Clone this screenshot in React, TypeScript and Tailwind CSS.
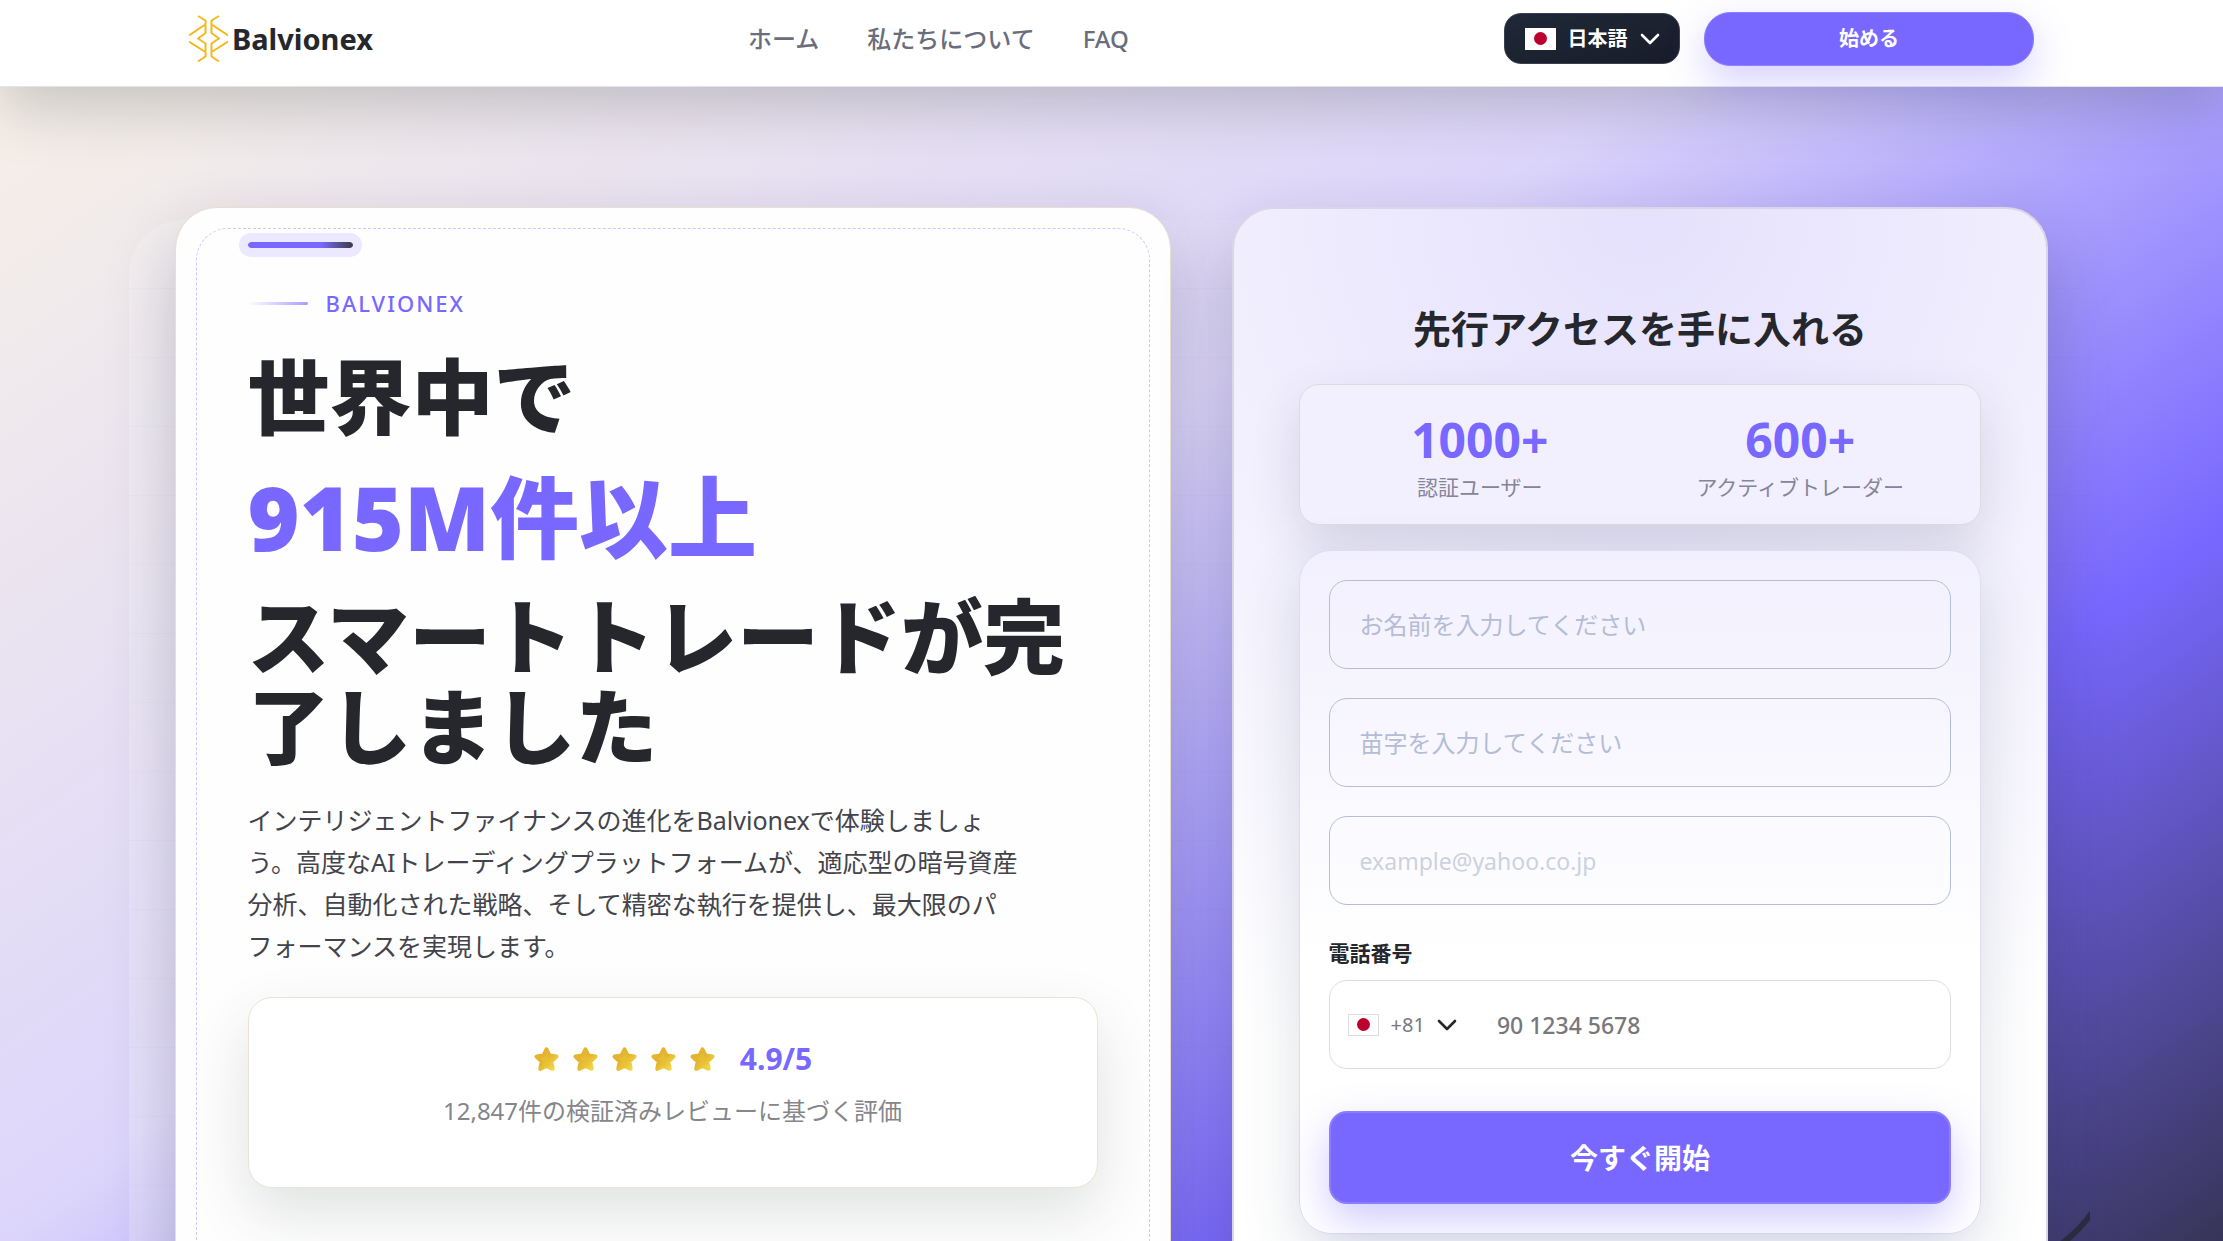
import React from "react";

function Logo() {
  return (
    <svg width="39" height="48" viewBox="0 0 39 48" fill="none" stroke="#f3b91c" strokeWidth="2" strokeLinejoin="round" aria-hidden="true">
      <path d="M9 1l7.500 4.500V18L9 23.500l7.500 5V41.500L9 46.500M15.500 10 0 20.500M0 26.500l15.500 10" />
      <path d="M30 1l-7.500 4.500V18l7.500 5.500-7.500 5V41.500l7.500 5M23.500 10 39 20.500M39 26.500l-15.500 10" />
    </svg>
  );
}

function Flag({ className = "" }: { className?: string }) {
  return (
    <span className={"inline-flex h-[22px] w-[31px] shrink-0 items-center justify-center bg-white " + className}>
      <span className="size-[13px] rounded-full bg-[#bc002d]" />
    </span>
  );
}

function Chevron() {
  return (
    <svg width="20" height="12" viewBox="0 0 20 12" fill="none" stroke="currentColor" strokeWidth="2.6" strokeLinecap="round" strokeLinejoin="round" aria-hidden="true">
      <path d="M2 2l8 8 8-8" />
    </svg>
  );
}

function Star() {
  return (
    <svg width="27" height="27" viewBox="0 0 24 24" aria-hidden="true">
      <defs>
        <linearGradient id="starFill" x1="0" y1="0" x2="1" y2="1">
          <stop offset="0" stopColor="#f3c53c" />
          <stop offset="0.5" stopColor="#e6bc35" />
          <stop offset="1" stopColor="#f1d23a" />
        </linearGradient>
        <linearGradient id="starEdge" x1="0" y1="0" x2="1" y2="1">
          <stop offset="0" stopColor="#e6b12f" />
          <stop offset="0.5" stopColor="#e3b630" />
          <stop offset="1" stopColor="#f6de4a" />
        </linearGradient>
      </defs>
      <path d="M12 3l2.700 5.500 6.200.9-4.600 4.400 1.200 6.500L12 17.800l-5.500 2.500 1.200-6.500L3.100 9.400l6.200-.9z" fill="url(#starFill)" stroke="url(#starEdge)" strokeWidth="3.600" strokeLinejoin="round" />
    </svg>
  );
}

const fieldClass =
  "block h-[89px] w-full rounded-[18px] border border-[#b4bed4] bg-transparent px-[30px] outline-none";

export default function App() {
  return (
    <div
      lang="ja"
      className="relative h-screen overflow-hidden bg-[linear-gradient(145deg,#f8f2e6_0px,#ddd6fb_1010px,#7868ff_1706px,#26272c_2447px)] font-['Noto_Sans','Noto_Sans_CJK_JP',sans-serif] text-[#26272c]"
    >
      <header className="relative z-10 h-[87px] border-b border-[#e2e4ea] bg-white shadow-[0_20px_60px_rgba(30,40,40,0.22)]">
        <div className="mx-auto flex h-[77px] w-[83%] items-center justify-between">
          <a href="#" className="flex items-center gap-1 text-[29px] font-bold">
            <Logo />
            <span>Balvionex</span>
          </a>
          <nav className="flex gap-12 text-2xl font-medium text-[#6a6d7c]">
            <a href="#">ホーム</a>
            <a href="#">私たちについて</a>
            <a href="#">FAQ</a>
          </nav>
          <div className="flex items-center gap-6">
            <button className="flex h-[51px] w-[176px] items-center justify-center gap-3 rounded-[17px] border border-[#394151] bg-linear-to-br from-[#1f2937] to-[#181c2a] text-xl font-bold text-white">
              <Flag />
              <span>日本語</span>
              <Chevron />
            </button>
            <button className="h-[54px] w-[330px] rounded-[26px] border border-[#8d80ff] bg-[#7868ff] text-xl font-bold text-white shadow-[0_16px_40px_rgba(120,104,255,0.3)]">
              始める
            </button>
          </div>
        </div>
      </header>

      <main className="relative mx-auto mt-[120px] grid w-[84.3%] grid-cols-[995fr_816fr] gap-[61px]">
        <div className="absolute -inset-x-[46px] top-[13px] bottom-0 rounded-t-[55px] bg-[linear-gradient(rgba(40,40,60,0.02)_1px,transparent_1px),linear-gradient(100deg,rgba(255,255,255,0.25),rgba(255,255,255,0)_70%)] bg-size-[69px_69px,100%_100%] bg-position-[0_-1px,0_0]" />

        <section className="relative min-h-[1200px] rounded-[42px] border border-[#e6dfd2] bg-[#fefefe] px-[72px] pt-[34px] pb-[120px] shadow-[0_30px_70px_rgba(30,30,60,0.24)]">
          <div className="pointer-events-none absolute inset-5 rounded-[32px] border border-dashed border-[#cdc6ff]" />
          <div className="h-1.5 w-[105px] rounded-full bg-linear-to-r from-[#7868ff] from-70% to-[#3c3a48] outline-9 outline-[#ebe8ff]" />
          <div className="mt-[37px] flex items-center gap-[18px] text-[22px] leading-9 font-medium tracking-[2px] text-[#7868ff]">
            <span className="h-[3px] w-[60px] rounded bg-linear-to-r from-transparent to-[#a99eff]" />
            <span>BALVIONEX</span>
          </div>
          <h1 className="mt-[30px] text-[82px] leading-[90px] font-black">
            <span className="block">世界中で</span>
            <span className="mt-[26px] mb-6 block text-[89px] leading-[100px] text-[#7868ff]">915M件以上</span>
            <span className="block">スマートトレードが完了しました</span>
          </h1>
          <p className="mt-7 max-w-[779px] text-[25px] leading-[42px] text-[#43444b] [line-break:strict]">
            インテリジェントファイナンスの進化をBalvionexで体験しましょう。高度なAIトレーディングプラットフォームが、適応型の暗号資産分析、自動化された戦略、そして精密な執行を提供し、最大限のパフォーマンスを実現します。
          </p>
          <div className="mt-[30px] rounded-3xl border border-[#e9e4d6] bg-white pt-10 pb-[60px] text-center shadow-[0_25px_60px_rgba(40,50,50,0.14)]">
            <div className="flex items-center justify-center gap-3 leading-[42px]">
              <Star />
              <Star />
              <Star />
              <Star />
              <Star />
              <span className="ml-3 text-[30px] font-bold text-[#7868ff]">4.9/5</span>
            </div>
            <p className="mt-[15px] text-2xl leading-8 text-[#85868a]">12,847件の検証済みレビューに基づく評価</p>
          </div>
        </section>

        <section className="relative rounded-[42px] border-2 border-[#dcd5e8] bg-[radial-gradient(circle_at_50%_0%,#e5e1fd_0%,#f4f2fe_42%,#ffffff_72%)] px-[65px] pt-[89px] pb-[120px] shadow-[0_30px_70px_rgba(30,30,60,0.24)]">
          <h2 className="text-center text-[38px] leading-[60px] font-bold">先行アクセスを手に入れる</h2>
          <div className="mt-[26px] grid grid-cols-2 rounded-[20px] border border-[#e0d9e0] bg-[#f2f0fe] px-5 pt-6 pb-[21px] text-center shadow-[0_20px_50px_rgba(40,50,70,0.14)]">
            <div>
              <p className="text-5xl leading-[62px] font-bold text-[#7868ff]">1000+</p>
              <p className="text-[21px] leading-8 text-[#85859a]">認証ユーザー</p>
            </div>
            <div>
              <p className="text-5xl leading-[62px] font-bold text-[#7868ff]">600+</p>
              <p className="text-[21px] leading-8 text-[#85859a]">アクティブトレーダー</p>
            </div>
          </div>
          <form className="mt-[25px] flex flex-col gap-[29px] rounded-[32px] border border-[#dcdeec] bg-linear-to-b from-[#f2f0fe] to-white to-60% p-[29px] shadow-[0_20px_60px_rgba(40,60,90,0.16)]">
            <input type="text" aria-label="名" placeholder="お名前を入力してください" className={fieldClass + " text-2xl placeholder:text-[#b3bdd6]"} />
            <input type="text" aria-label="姓" placeholder="苗字を入力してください" className={fieldClass + " text-2xl placeholder:text-[#b3bdd6]"} />
            <input type="email" aria-label="メール" placeholder="example@yahoo.co.jp" className={fieldClass + " text-[23px] placeholder:text-[#cbd2e0]"} />
            <div>
              <label htmlFor="tel" className="block text-[21px] leading-[38px] font-bold">電話番号</label>
              <div className="mt-2 flex h-[89px] items-center rounded-[18px] border border-[#deddda] bg-white px-[18px]">
                <button type="button" aria-label="国番号 +81" className="flex items-center gap-3 text-xl text-[#77787c]">
                  <Flag className="border border-[#ddd]" />
                  <span>+81</span>
                  <span className="text-[#26272c]"><Chevron /></span>
                </button>
                <input id="tel" type="tel" placeholder="90 1234 5678" className="ml-10 h-12 min-w-0 flex-1 bg-transparent text-[23px] font-medium outline-none placeholder:text-[#77787c]" />
              </div>
            </div>
            <button type="submit" className="mt-[13px] h-[93px] rounded-[18px] border-2 border-[#8a7dff] bg-[#7868ff] text-[28px] font-bold text-white shadow-[0_16px_40px_rgba(120,104,255,0.35)]">
              今すぐ開始
            </button>
          </form>
        </section>
      </main>

      <svg className="absolute right-[6%] bottom-0" width="32" height="32" viewBox="0 0 32 32" fill="none" stroke="#2c2b3d" strokeWidth="6" aria-hidden="true">
        <path d="M2 36C13 28 24 18 34 4" />
      </svg>
    </div>
  );
}
